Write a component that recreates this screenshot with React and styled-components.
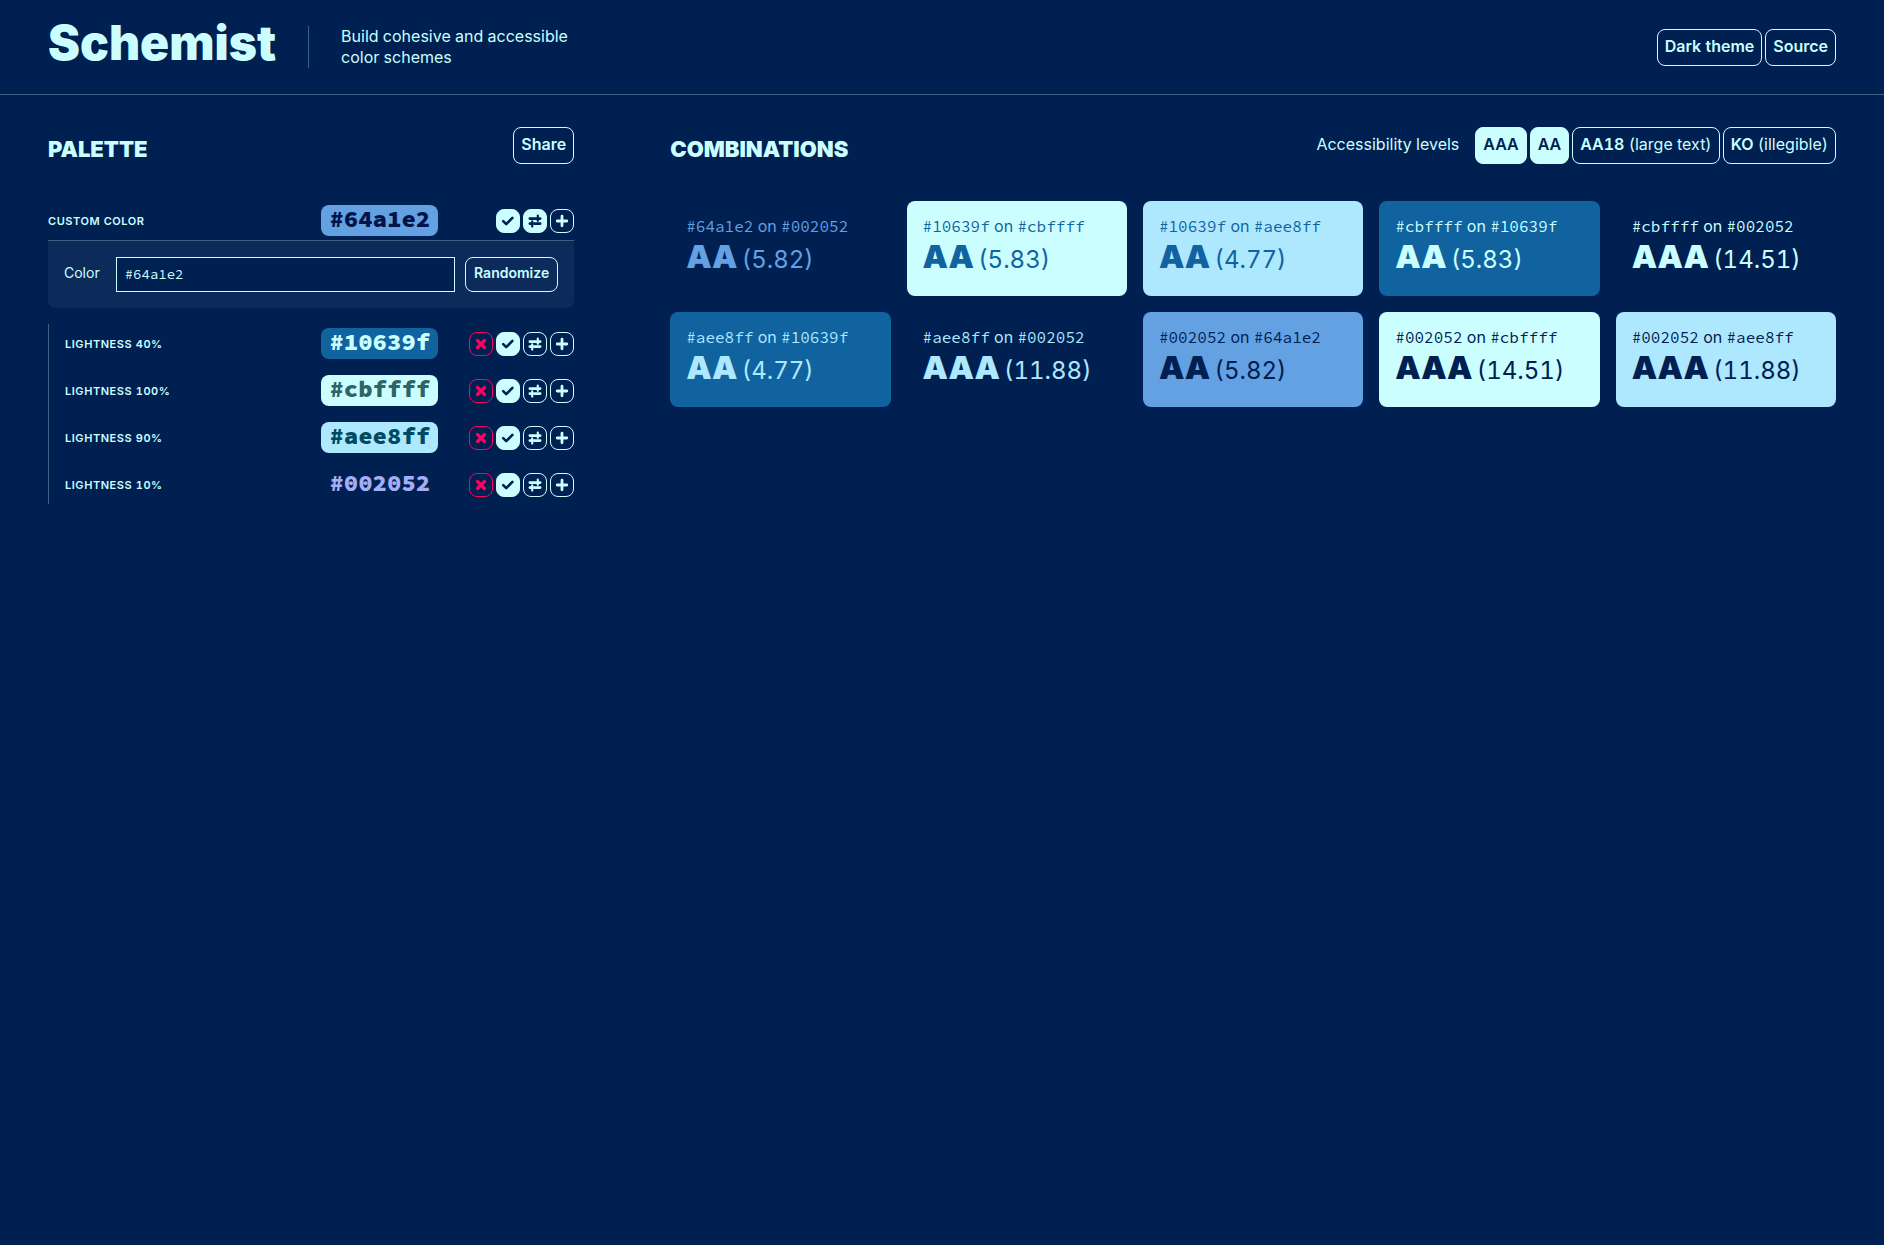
import React, { useState } from "react";
import styled, { createGlobalStyle } from "styled-components";

const color = {
  page: "#002052",
  text: "#cbffff",
  line: "#3d6182",
  panel: "#0d2b5a",
  danger: "#ff0060",
};

const mono = `"Source Code Pro", "Liberation Mono", monospace`;

const GlobalStyle = createGlobalStyle`
  *, *::before, *::after { box-sizing: border-box; }
  body {
    margin: 0;
    background: ${color.page};
    color: ${color.text};
    font: 400 16px/21px Inter, "Liberation Sans", sans-serif;
    font-variant-numeric: tabular-nums;
  }
  h1, h2, h3, p, ul { margin: 0; padding: 0; }
  ul { list-style: none; }
`;

const Header = styled.header`
  display: flex;
  justify-content: space-between;
  align-items: center;
  padding: 26px 48px;
  border-bottom: 1px solid ${color.line};
`;

const Brand = styled.div`
  display: flex;
  align-items: flex-start;
  gap: 32px;
`;

const Logo = styled.h1`
  font-size: 48px;
  font-weight: 900;
  line-height: 34px;
`;

const Tagline = styled.p`
  max-width: 280px;
  padding-left: 32px;
  border-left: 1px solid ${color.line};
`;

const ButtonGroup = styled.div`
  display: flex;
  gap: 3px;
`;

const Button = styled.button`
  height: ${(p) => (p.$compact ? 35 : 37)}px;
  padding: ${(p) => (p.$compact ? "0 8px 4px" : "0 7px 2px")};
  border: 1px solid ${color.text};
  border-radius: 8px;
  background: ${(p) => (p.$on ? color.text : "transparent")};
  color: ${(p) => (p.$on ? color.page : color.text)};
  font: inherit;
  font-size: ${(p) => (p.$compact ? 14 : 16)}px;
  font-weight: ${(p) => (p.$regular ? 400 : 600)};
  white-space: nowrap;
  cursor: pointer;

  b { font-weight: 600; }
`;

const LinkButton = styled(Button)`
  display: flex;
  align-items: center;
  text-decoration: none;
`;

const Main = styled.main`
  display: grid;
  grid-template-columns: 311fr 689fr;
  gap: 96px;
  padding: 32px 48px;
`;

const SectionHeader = styled.div`
  display: flex;
  justify-content: space-between;
  align-items: flex-start;
  height: 37px;
  margin-bottom: 37px;
`;

const Title = styled.h2`
  padding-top: 8px;
  font-size: 22px;
  font-weight: 900;
  line-height: 29px;
  text-transform: uppercase;
`;

const Levels = styled.div`
  display: flex;
  align-items: center;
  gap: 16px;
`;

const LevelsLabel = styled.span`
  padding-bottom: 2px;
`;

const Row = styled.div`
  display: flex;
  align-items: center;
  height: 31px;
`;

const RowName = styled.h3`
  flex: 1;
  font-size: 11px;
  font-weight: 600;
  letter-spacing: 0.05em;
  line-height: 16px;
  text-transform: uppercase;
`;

const Swatch = styled.code`
  height: 31px;
  padding: 0 8px;
  border-radius: 8px;
  background: ${(p) => p.$bg};
  color: ${(p) => p.$fg};
  font: 900 24px/27px ${mono};
`;

const Actions = styled.div`
  display: flex;
  justify-content: flex-end;
  gap: 3px;
  width: 105px;
  margin-left: 31px;
`;

const IconButton = styled.button`
  display: grid;
  place-items: center;
  width: 24px;
  height: 24px;
  padding: 0;
  border: 1px solid ${(p) => (p.$danger ? color.danger : color.text)};
  border-radius: 8px;
  background: ${(p) => (p.$on ? color.text : "transparent")};
  color: ${(p) => (p.$danger ? color.danger : p.$on ? color.page : color.text)};
  cursor: pointer;
`;

const Base = styled.div`
  padding-top: 4px;
`;

const Editor = styled.div`
  display: flex;
  align-items: center;
  margin-top: 4px;
  padding: 16px;
  border-top: 1px solid ${color.line};
  border-radius: 0 0 8px 8px;
  background: ${color.panel};
`;

const FieldLabel = styled.label`
  margin-right: 16px;
  padding-bottom: 4px;
  font-size: 14px;
`;

const Field = styled.input`
  flex: 1;
  min-width: 0;
  height: 35px;
  margin-right: 10px;
  padding: 0 8px 2px;
  border: 1px solid ${color.text};
  border-radius: 0;
  background: ${color.page};
  color: ${color.text};
  font: 400 14px/21px ${mono};
`;

const Derived = styled.ul`
  display: grid;
  gap: 16px;
  margin-top: 16px;
  padding: 4px 0 4px 16px;
  border-left: 1px solid ${color.line};
`;

const Cards = styled.ul`
  display: grid;
  grid-template-columns: repeat(auto-fill, minmax(200px, 1fr));
  gap: 16px;
`;

const Card = styled.li`
  height: 95px;
  padding: 15px 16px;
  border-radius: 8px;
  background: ${(p) => p.$bg};
  color: ${(p) => p.$fg};

  code { font: 400 16px/21px ${mono}; }
`;

const Score = styled.p`
  line-height: 40px;

  b {
    font-size: 32px;
    font-weight: 900;
  }

  span {
    font-size: 24px;
  }
`;

const Svg = ({ children }) => (
  <svg width="14" height="14" viewBox="0 0 14 14" fill="none" stroke="currentColor" strokeLinecap="round" strokeLinejoin="round" aria-hidden="true">
    {children}
  </svg>
);

const CrossIcon = () => (
  <Svg><path d="M3.5 3.5l7 7M10.5 3.5l-7 7" strokeWidth="3.2" /></Svg>
);
const CheckIcon = () => (
  <Svg><path d="M2.2 7.1l3 3 6.2-6.2" strokeWidth="2.6" /></Svg>
);
const SlidersIcon = () => (
  <Svg>
    <path d="M1.8 4.6h6.4M10 4.6h2.2M1.8 9.6h2M6 9.6h6.2" strokeWidth="2.6" />
    <path d="M9.8 1.6v5.2M4.2 7.4v5.2" strokeWidth="2.2" />
  </Svg>
);
const PlusIcon = () => (
  <Svg><path d="M7 2.2v9.6M2.2 7h9.6" strokeWidth="2.8" /></Svg>
);

const derived = [
  { name: "Lightness 40%", hex: "#10639f", fg: "#cbffff" },
  { name: "Lightness 100%", hex: "#cbffff", fg: "#2f6366" },
  { name: "Lightness 90%", hex: "#aee8ff", fg: "#004a60" },
  { name: "Lightness 10%", hex: "#002052", fg: "#a5adf5" },
];

const combinations = [
  ["#64a1e2", "#002052", "AA", "5.82"],
  ["#10639f", "#cbffff", "AA", "5.83"],
  ["#10639f", "#aee8ff", "AA", "4.77"],
  ["#cbffff", "#10639f", "AA", "5.83"],
  ["#cbffff", "#002052", "AAA", "14.51"],
  ["#aee8ff", "#10639f", "AA", "4.77"],
  ["#aee8ff", "#002052", "AAA", "11.88"],
  ["#002052", "#64a1e2", "AA", "5.82"],
  ["#002052", "#cbffff", "AAA", "14.51"],
  ["#002052", "#aee8ff", "AAA", "11.88"],
];

function PaletteRow({ name, hex, fg, root }) {
  return (
    <Row>
      <RowName>{name}</RowName>
      <Swatch $bg={hex} $fg={fg}>{hex}</Swatch>
      <Actions>
        {!root && <IconButton $danger aria-label={`Delete ${name}`}><CrossIcon /></IconButton>}
        <IconButton $on aria-pressed="true" aria-label={`Use ${name}`}><CheckIcon /></IconButton>
        <IconButton $on={root} aria-pressed={!!root} aria-label={`Edit ${name}`}><SlidersIcon /></IconButton>
        <IconButton aria-label={`Add variation of ${name}`}><PlusIcon /></IconButton>
      </Actions>
    </Row>
  );
}

export default function App() {
  const [base, setBase] = useState("#64a1e2");
  return (
    <>
      <GlobalStyle />
      <Header>
        <Brand>
          <Logo>Schemist</Logo>
          <Tagline>Build cohesive and accessible color schemes</Tagline>
        </Brand>
        <ButtonGroup>
          <Button>Dark theme</Button>
          <LinkButton as="a" href="#source">Source</LinkButton>
        </ButtonGroup>
      </Header>
      <Main>
        <section>
          <SectionHeader>
            <Title>Palette</Title>
            <Button>Share</Button>
          </SectionHeader>
          <Base>
            <PaletteRow root name="Custom color" hex="#64a1e2" fg="#001447" />
            <Editor>
              <FieldLabel htmlFor="base-color">Color</FieldLabel>
              <Field id="base-color" value={base} onChange={(e) => setBase(e.target.value)} />
              <Button $compact>Randomize</Button>
            </Editor>
          </Base>
          <Derived>
            {derived.map((d) => (
              <li key={d.name}><PaletteRow {...d} /></li>
            ))}
          </Derived>
        </section>
        <section>
          <SectionHeader>
            <Title>Combinations</Title>
            <Levels>
              <LevelsLabel id="levels">Accessibility levels</LevelsLabel>
              <ButtonGroup role="group" aria-labelledby="levels">
                <Button $on aria-pressed="true">AAA</Button>
                <Button $on aria-pressed="true">AA</Button>
                <Button $regular aria-pressed="false"><b>AA18</b> (large text)</Button>
                <Button $regular aria-pressed="false"><b>KO</b> (illegible)</Button>
              </ButtonGroup>
            </Levels>
          </SectionHeader>
          <Cards>
            {combinations.map(([fg, bg, level, ratio]) => (
              <Card key={fg + bg} $fg={fg} $bg={bg}>
                <p><code>{fg}</code> on <code>{bg}</code></p>
                <Score><b>{level}</b> <span>({ratio})</span></Score>
              </Card>
            ))}
          </Cards>
        </section>
      </Main>
    </>
  );
}
